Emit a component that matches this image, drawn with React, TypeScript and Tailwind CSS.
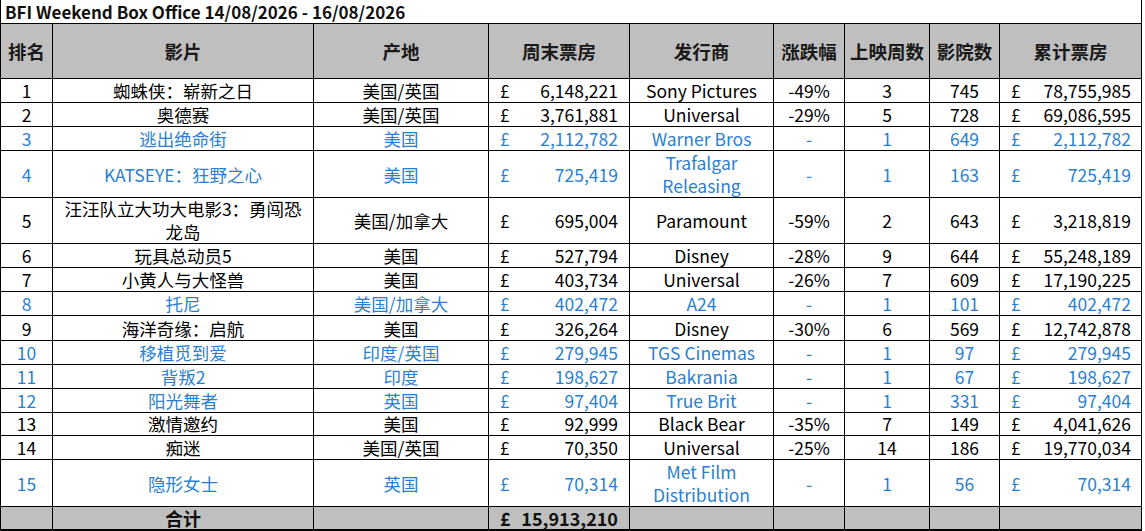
import React from "react";

type Row = {
  rank: number;
  film: React.ReactNode;
  origin: string;
  weekend: string;
  dist: React.ReactNode;
  change: string;
  weeks: number;
  cinemas: number;
  total: string;
  blue?: boolean;
  h: string;
};

const rows: Row[] = [
  { rank: 1, film: "蜘蛛侠：崭新之日", origin: "美国/英国", weekend: "6,148,221", dist: "Sony Pictures", change: "-49%", weeks: 3, cinemas: 745, total: "78,755,985", h: "h-[24px]" },
  { rank: 2, film: "奥德赛", origin: "美国/英国", weekend: "3,761,881", dist: "Universal", change: "-29%", weeks: 5, cinemas: 728, total: "69,086,595", h: "h-[24px]" },
  { rank: 3, film: "逃出绝命街", origin: "美国", weekend: "2,112,782", dist: "Warner Bros", change: "-", weeks: 1, cinemas: 649, total: "2,112,782", blue: true, h: "h-[24px]" },
  { rank: 4, film: "KATSEYE：狂野之心", origin: "美国", weekend: "725,419", dist: (<>Trafalgar<br />Releasing</>), change: "-", weeks: 1, cinemas: 163, total: "725,419", blue: true, h: "h-[46px]" },
  { rank: 5, film: (<>汪汪队立大功大电影3：勇闯恐<br />龙岛</>), origin: "美国/加拿大", weekend: "695,004", dist: "Paramount", change: "-59%", weeks: 2, cinemas: 643, total: "3,218,819", h: "h-[47px]" },
  { rank: 6, film: "玩具总动员5", origin: "美国", weekend: "527,794", dist: "Disney", change: "-28%", weeks: 9, cinemas: 644, total: "55,248,189", h: "h-[24px]" },
  { rank: 7, film: "小黄人与大怪兽", origin: "美国", weekend: "403,734", dist: "Universal", change: "-26%", weeks: 7, cinemas: 609, total: "17,190,225", h: "h-[24px]" },
  { rank: 8, film: "托尼", origin: "美国/加拿大", weekend: "402,472", dist: "A24", change: "-", weeks: 1, cinemas: 101, total: "402,472", blue: true, h: "h-[24px]" },
  { rank: 9, film: "海洋奇缘：启航", origin: "美国", weekend: "326,264", dist: "Disney", change: "-30%", weeks: 6, cinemas: 569, total: "12,742,878", h: "h-[25px]" },
  { rank: 10, film: "移植觅到爱", origin: "印度/英国", weekend: "279,945", dist: "TGS Cinemas", change: "-", weeks: 1, cinemas: 97, total: "279,945", blue: true, h: "h-[24px]" },
  { rank: 11, film: "背叛2", origin: "印度", weekend: "198,627", dist: "Bakrania", change: "-", weeks: 1, cinemas: 67, total: "198,627", blue: true, h: "h-[24px]" },
  { rank: 12, film: "阳光舞者", origin: "英国", weekend: "97,404", dist: "True Brit", change: "-", weeks: 1, cinemas: 331, total: "97,404", blue: true, h: "h-[23px]" },
  { rank: 13, film: "激情邀约", origin: "美国", weekend: "92,999", dist: "Black Bear", change: "-35%", weeks: 7, cinemas: 149, total: "4,041,626", h: "h-[24px]" },
  { rank: 14, film: "痴迷", origin: "美国/英国", weekend: "70,350", dist: "Universal", change: "-25%", weeks: 14, cinemas: 186, total: "19,770,034", h: "h-[24px]" },
  { rank: 15, film: "隐形女士", origin: "英国", weekend: "70,314", dist: (<>Met Film<br />Distribution</>), change: "-", weeks: 1, cinemas: 56, total: "70,314", blue: true, h: "h-[46px]" },
];

const grid = "grid grid-cols-[52px_261px_175px_141px_144px_71px_85px_70px_142px]";
const cell = "border-r border-b border-black flex items-center justify-center text-center";

export default function App() {
  return (
    <div
      className="w-[1145px] h-[531px] bg-white text-black overflow-hidden"
      style={{ fontFamily: '"Noto Sans CJK SC", "Noto Sans", sans-serif' }}
    >
      <div className="w-[1142px] border-l border-black">
        {/* Title */}
        <div className="h-[24px] border-r border-b border-black flex items-center pl-[4px]">
          <span className="text-[17px] font-semibold leading-none text-[#111]">
            BFI Weekend Box Office 14/08/2026 - 16/08/2026
          </span>
        </div>
        {/* Header */}
        <div className={`${grid} h-[55px] bg-[#bfbfbf] text-[18.5px] font-bold text-[#1a1a1a] leading-none`}>
          {["排名", "影片", "产地", "周末票房", "发行商", "涨跌幅", "上映周数", "影院数", "累计票房"].map((t) => (
            <div key={t} className={`${cell} whitespace-nowrap`}>{t}</div>
          ))}
        </div>
        {/* Body */}
        {rows.map((r) => (
          <div
            key={r.rank}
            className={`${grid} ${r.h} text-[17.5px] leading-[23px] ${r.blue ? "text-[#2a7fd2]" : "text-black"}`}
          >
            <div className={cell}>{r.rank}</div>
            <div className={`${cell} whitespace-nowrap`}>{r.film}</div>
            <div className={`${cell} whitespace-nowrap`}>{r.origin}</div>
            <div className={`${cell} justify-between! pl-[11px] pr-[11px]`}>
              <span>£</span>
              <span>{r.weekend}</span>
            </div>
            <div className={`${cell} whitespace-nowrap`}>{r.dist}</div>
            <div className={cell}>{r.change}</div>
            <div className={cell}>{r.weeks}</div>
            <div className={cell}>{r.cinemas}</div>
            <div className={`${cell} justify-between! pl-[11px] pr-[10px]`}>
              <span>£</span>
              <span>{r.total}</span>
            </div>
          </div>
        ))}
        {/* Total */}
        <div className={`${grid} h-[25px] bg-[#bfbfbf] text-[18px] font-bold leading-none text-[#111]`}>
          <div className={`${cell} border-b-2`}></div>
          <div className={`${cell} border-b-2`}>合计</div>
          <div className={`${cell} border-b-2`}></div>
          <div className={`${cell} border-b-2 justify-between! pl-[11px] pr-[11px]`}>
            <span>£</span>
            <span>15,913,210</span>
          </div>
          <div className={`${cell} border-b-2`}></div>
          <div className={`${cell} border-b-2`}></div>
          <div className={`${cell} border-b-2`}></div>
          <div className={`${cell} border-b-2`}></div>
          <div className={`${cell} border-b-2`}></div>
        </div>
      </div>
    </div>
  );
}
